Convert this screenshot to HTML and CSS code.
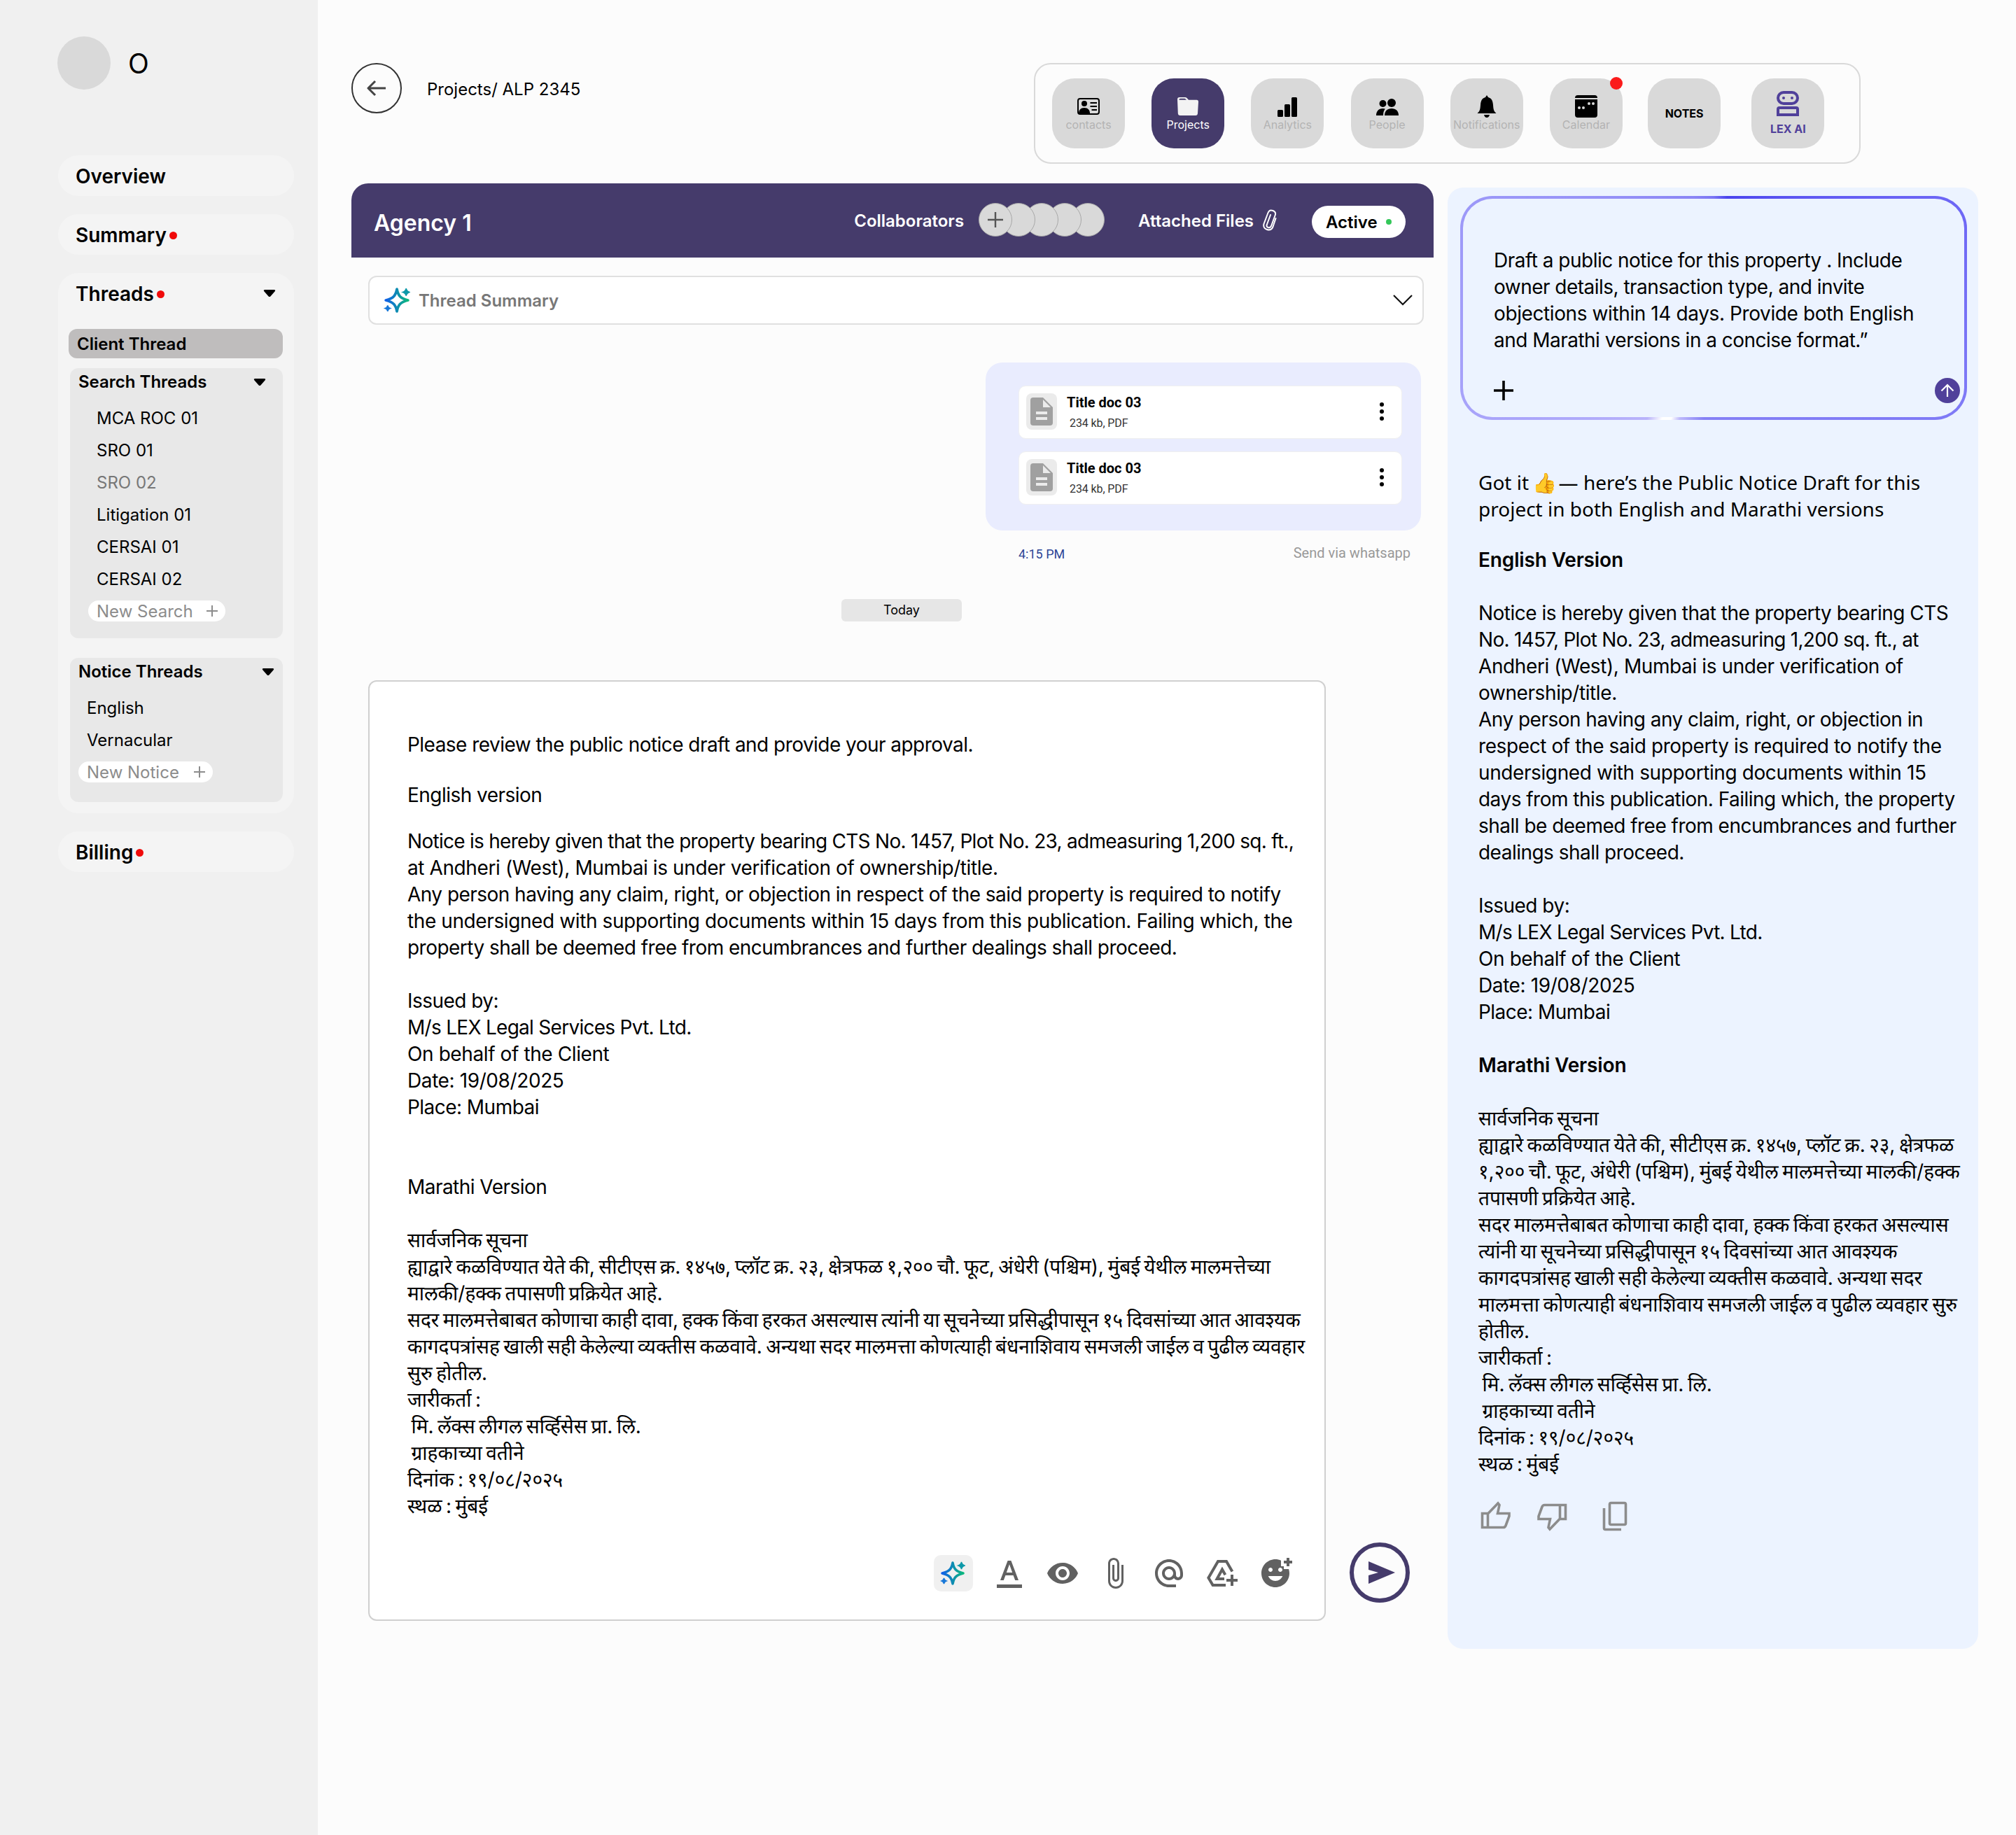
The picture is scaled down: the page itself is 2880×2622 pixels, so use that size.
FILE: index.html
```html
<!DOCTYPE html>
<html lang="en">
<head>
    <meta charset="UTF-8">
    <meta name="viewport" content="width=device-width, initial-scale=1.0">
    <title>Projects / ALP 2345</title>

    <link rel="stylesheet" href="styles.css">
</head>
<body>

    <!-- shared gradient for the sparkle icons -->
    <svg class="defs" width="0" height="0">
        <defs>
            <linearGradient id="spark" x1="0" y1="0" x2="1" y2="0">
                <stop offset="0" stop-color="#1060e8"/>
                <stop offset="1" stop-color="#0cb87c"/>
            </linearGradient>
            <symbol id="sparkle" viewBox="0 0 36 36">
                <path d="M18 3c1.600 8.500 4.500 12.500 15 15c-10.500 2.500-13.400 6.500-15 15c-1.600-8.500-4.500-12.500-15-15c10.500-2.500 13.400-6.500 15-15z" fill="none" stroke="url(#spark)" stroke-width="3.600" stroke-linejoin="round"/>
                <path d="M30.500 2c.6 3 1.500 4 4.500 5c-3 1-3.900 2-4.500 5c-.6-3-1.500-4-4.500-5c3-1 3.900-2 4.500-5z" fill="#0c98a8" stroke="#0c98a8" stroke-width="1.500"/>
                <path d="M5.500 25c.5 2.400 1.200 3.200 3.500 4c-2.300.8-3 1.600-3.500 4c-.5-2.400-1.200-3.200-3.500-4c2.300-.8 3-1.600 3.500-4z" fill="#1878d8" stroke="#1878d8" stroke-width="1.500"/>
            </symbol>
            <symbol id="caret" viewBox="0 0 18 12">
                <path d="M2 1h14q2 .4 .9 2l-6.500 7.400q-1.400 1.200-2.800 0L1.100 3Q0 1.400 2 1z"/>
            </symbol>
        </defs>
    </svg>

    <div class="app">

        <aside class="sidebar">
            <div class="profile">
                <span class="avatar"></span>
                <span class="initial">O</span>
            </div>

            <a class="nav-item">Overview</a>
            <a class="nav-item">Summary<i class="dot"></i></a>

            <div class="nav-group">
                <div class="nav-title">Threads<i class="dot"></i>
                    <svg class="caret"><use href="#caret"/></svg>
                </div>
                <div class="client-thread">Client Thread</div>

                <div class="block search-block">
                    <div class="block-title">Search Threads <svg class="caret"><use href="#caret"/></svg></div>
                    <ul>
                        <li>MCA ROC 01</li>
                        <li>SRO 01</li>
                        <li class="muted">SRO 02</li>
                        <li>Litigation 01</li>
                        <li>CERSAI 01</li>
                        <li>CERSAI 02</li>
                    </ul>
                    <button class="new-btn">New Search
                        <svg width="16" height="16" viewBox="0 0 16 16"><path d="M8 0v16M0 8h16" stroke="#8c8c8c" stroke-width="2"/></svg>
                    </button>
                </div>

                <div class="block notice-block">
                    <div class="block-title">Notice Threads <svg class="caret"><use href="#caret"/></svg></div>
                    <ul>
                        <li>English</li>
                        <li>Vernacular</li>
                    </ul>
                    <button class="new-btn">New Notice
                        <svg width="16" height="16" viewBox="0 0 16 16"><path d="M8 0v16M0 8h16" stroke="#8c8c8c" stroke-width="2"/></svg>
                    </button>
                </div>
            </div>

            <a class="nav-item">Billing<i class="dot"></i></a>
        </aside>

        <main class="main">

            <header class="topbar">
                <button class="back">
                    <svg width="28" height="24" viewBox="0 0 28 24"><path d="M27 12H2M12 2L2 12l10 10" fill="none" stroke="#444" stroke-width="3" stroke-linejoin="round"/></svg>
                </button>
                <span class="crumb">Projects/ ALP 2345</span>

                <nav class="tiles">
                    <a class="tile">
                        <svg width="32" height="32" viewBox="0 0 32 32">
                            <rect x="1" y="5" width="30" height="22" rx="3" fill="none" stroke="#000" stroke-width="2"/>
                            <circle cx="10" cy="12" r="4"/><path d="M2 26c0-5 3-8 8-8s8 3 8 8z"/>
                            <path d="M18.500 11H28M18.500 16H28M20.500 21H28" stroke="#000" stroke-width="2"/>
                        </svg>
                        <span>contacts</span>
                    </a>
                    <a class="tile active">
                        <svg width="32" height="32" viewBox="0 0 32 32">
                            <path d="M1 6q0-3 3-3h8q1.500 0 2.500 1l2.500 2.700h11.500q2.500 0 2.500 2.800L30 26q-.2 3-3 3H5q-3 0-3.200-3z" fill="#f3f3f3"/>
                            <path d="M3.300 6.800q.2-2 2-2h6q1 0 2.600 2z" fill="#453b6b"/>
                        </svg>
                        <span>Projects</span>
                    </a>
                    <a class="tile">
                        <svg width="32" height="32" viewBox="0 0 32 32"><rect x="2" y="21" width="8" height="10" rx="1.500"/><rect x="12" y="13" width="8" height="18" rx="1.500"/><rect x="22" y="3" width="8" height="28" rx="1.500"/></svg>
                        <span>Analytics</span>
                    </a>
                    <a class="tile">
                        <svg width="32" height="32" viewBox="0 0 32 32"><circle cx="9.500" cy="12" r="5"/><circle cx="22" cy="11" r="6"/><path d="M0 29c0-6 3.500-10 9.500-10q2 0 3.300.5Q10 23 10 29z"/><path d="M12 29c0-6.500 4-10 10-10s10 3.500 10 10z"/></svg>
                        <span>People</span>
                    </a>
                    <a class="tile">
                        <svg width="32" height="32" viewBox="0 0 32 32"><path d="M16 0l2 3c5 1.500 6.500 5 7 11c.4 6 1 9 4.500 12h-27C6 23 6.600 20 7 14c.5-6 2-9.500 7-11zM12 28h8q-1 4-4 4t-4-4z"/></svg>
                        <span>Notifications</span>
                    </a>
                    <a class="tile">
                        <svg width="32" height="32" viewBox="0 0 32 32"><path d="M0 4q0-4 4-4h24q4 0 4 4zM0 6h32v22q0 4-4 4H4q-4 0-4-4z"/><g fill="#d9d9d9"><circle cx="6" cy="18" r="2"/><circle cx="12" cy="18" r="2"/><circle cx="20" cy="12" r="2"/><circle cx="26" cy="12" r="2"/></g></svg>
                        <span>Calendar</span>
                        <i class="badge"></i>
                    </a>
                    <a class="tile notes"><b>NOTES</b></a>
                    <a class="tile lex">
                        <svg width="32" height="36" viewBox="0 0 32 36"><g fill="none" stroke="#50409a" stroke-width="4"><rect x="2" y="2" width="28" height="16" rx="8"/><path d="M2 34V26q0-2 2-2h24q2 0 2 2v8z"/></g><circle cx="10" cy="10" r="2" fill="#50409a"/><circle cx="22" cy="10" r="2" fill="#50409a"/></svg>
                        <b>LEX AI</b>
                    </a>
                </nav>
            </header>

            <div class="columns">

                <section class="thread">
                    <div class="thread-head">
                        <h1>Agency 1</h1>
                        <span class="label">Collaborators</span>
                        <div class="people">
                            <i><svg width="22" height="22" viewBox="0 0 22 22"><path d="M11 0v22M0 11h22" stroke="#555" stroke-width="2.400"/></svg></i>
                            <i></i><i></i><i></i><i></i>
                        </div>
                        <span class="label">Attached Files</span>
                        <svg class="clip" width="22" height="32" viewBox="0 0 22 32"><path d="M19.500 13L15.500 25Q13 31 7 29T2.500 21L8.500 5Q10.500 0 15.500 2T18.500 9L13 24Q11.500 27 8.500 26T7 21.500L12 8" fill="none" stroke="#fff" stroke-width="2" stroke-linecap="round"/></svg>
                        <span class="status">Active<i></i></span>
                    </div>

                    <div class="thread-body">
                        <div class="summary">
                            <svg width="38" height="38"><use href="#sparkle"/></svg>
                            <span>Thread Summary</span>
                            <svg class="chev" width="28" height="16" viewBox="0 0 28 16"><path d="M1 1l13 13L27 1" fill="none" stroke="#111" stroke-width="2.200"/></svg>
                        </div>

                        <div class="bubble">
                            <div class="doc">
                                <span class="doc-icon"><svg width="32" height="40" viewBox="0 0 32 40"><path d="M4 0h14l14 14v22q0 4-4 4H4q-4 0-4-4V4q0-4 4-4z" fill="#a0a0a0"/><path d="M18 3v11h11zM8 20h16v4H8zM8 28h16v4H8z" fill="#ebebeb"/></svg></span>
                                <div class="doc-info"><b>Title doc 03</b><span>234 kb, PDF</span></div>
                                <svg width="6" height="26" viewBox="0 0 6 26"><circle cx="3" cy="3" r="3"/><circle cx="3" cy="13" r="3"/><circle cx="3" cy="23" r="3"/></svg>
                            </div>
                            <div class="doc">
                                <span class="doc-icon"><svg width="32" height="40" viewBox="0 0 32 40"><path d="M4 0h14l14 14v22q0 4-4 4H4q-4 0-4-4V4q0-4 4-4z" fill="#a0a0a0"/><path d="M18 3v11h11zM8 20h16v4H8zM8 28h16v4H8z" fill="#ebebeb"/></svg></span>
                                <div class="doc-info"><b>Title doc 03</b><span>234 kb, PDF</span></div>
                                <svg width="6" height="26" viewBox="0 0 6 26"><circle cx="3" cy="3" r="3"/><circle cx="3" cy="13" r="3"/><circle cx="3" cy="23" r="3"/></svg>
                            </div>
                        </div>
                        <div class="bubble-meta"><span class="time">4:15 PM</span><span class="via">Send via whatsapp</span></div>

                        <div class="today">Today</div>

                        <div class="compose-row">
                            <div class="composer">
                                <p>Please review the public notice draft and provide your approval.</p>
                                <p class="sub">English version</p>
                                <p><span class="tight">Notice is hereby given that the property bearing CTS No. 1457, Plot No. 23, admeasuring 1,200 sq. ft.,</span><br>
                                <span class="wide">at Andheri (West), Mumbai is under verification of ownership/title.</span><br>
                                Any person having any claim, right, or objection in respect of the said property is required to notify<br>
                                <span class="wide">the undersigned with supporting documents within 15 days from this publication. Failing which, the</span><br>
                                property shall be deemed free from encumbrances and further dealings shall proceed.<br>
                                <br>
                                Issued by:<br>
                                <span class="tight">M/s LEX Legal Services Pvt. Ltd.</span><br>
                                <span class="wide">On behalf of the Client</span><br>
                                <span class="wide">Date: 19/08/2025</span><br>
                                Place: Mumbai<br>
                                <br>
                                <br>
                                Marathi Version<br>
                                <br></p>
                                <p class="mr" lang="mr">सार्वजनिक सूचना<br>
                                ह्याद्वारे कळविण्यात येते की, सीटीएस क्र. १४५७, प्लॉट क्र. २३, क्षेत्रफळ १,२०० चौ. फूट, अंधेरी (पश्चिम), मुंबई येथील मालमत्तेच्या<br>
                                मालकी/हक्क तपासणी प्रक्रियेत आहे.<br>
                                सदर मालमत्तेबाबत कोणाचा काही दावा, हक्क किंवा हरकत असल्यास त्यांनी या सूचनेच्या प्रसिद्धीपासून १५ दिवसांच्या आत आवश्यक<br>
                                कागदपत्रांसह खाली सही केलेल्या व्यक्तीस कळवावे. अन्यथा सदर मालमत्ता कोणत्याही बंधनाशिवाय समजली जाईल व पुढील व्यवहार<br>
                                सुरु होतील.<br>
                                जारीकर्ता :<br>
                                &nbsp;मि. लॅक्स लीगल सर्व्हिसेस प्रा. लि.<br>
                                &nbsp;ग्राहकाच्या वतीने<br>
                                दिनांक : १९/०८/२०२५<br>
                                स्थळ : मुंबई</p>

                                <div class="tools">
                                    <span class="spark-btn"><svg width="36" height="36"><use href="#sparkle"/></svg></span>
                                    <svg class="t-a" viewBox="0 0 24 24"><path d="M3 20h18v2.500H3zM5.500 17h2.400l1.300-3.500h5.600L16.100 17h2.400L13.200 3h-2.400zM9.900 11.500L12 5.600l2.100 5.900z"/></svg>
                                    <svg viewBox="0 0 24 24"><path d="M12 4.500C7 4.500 2.730 7.610 1 12c1.730 4.390 6 7.500 11 7.500s9.270-3.110 11-7.500c-1.730-4.390-6-7.500-11-7.500zM12 17c-2.760 0-5-2.240-5-5s2.240-5 5-5 5 2.240 5 5-2.240 5-5 5zm0-8c-1.660 0-3 1.340-3 3s1.340 3 3 3 3-1.340 3-3-1.340-3-3-3z"/></svg>
                                    <svg class="t-clip" viewBox="0 0 24 24"><path d="M16.500 6v11.500c0 2.210-1.790 4-4 4s-4-1.790-4-4V5c0-1.380 1.120-2.500 2.500-2.500s2.500 1.120 2.500 2.500v10.500c0 .55-.45 1-1 1s-1-.45-1-1V6H10v9.500c0 1.380 1.120 2.500 2.500 2.500s2.500-1.120 2.500-2.500V5c0-2.210-1.790-4-4-4S7 2.790 7 5v12.500c0 3.040 2.460 5.500 5.500 5.500s5.500-2.460 5.500-5.500V6h-1.500z"/></svg>
                                    <svg viewBox="0 0 24 24"><path d="M12 2C6.480 2 2 6.480 2 12s4.480 10 10 10h5v-2h-5c-4.340 0-8-3.660-8-8s3.660-8 8-8 8 3.660 8 8v1.430c0 .79-.71 1.570-1.500 1.570s-1.500-.78-1.500-1.570V12c0-2.760-2.240-5-5-5s-5 2.240-5 5 2.240 5 5 5c1.380 0 2.640-.56 3.540-1.470.65.89 1.770 1.470 2.960 1.470 1.970 0 3.500-1.600 3.500-3.570V12c0-5.520-4.480-10-10-10zm0 13c-1.660 0-3-1.340-3-3s1.340-3 3-3 3 1.340 3 3-1.340 3-3 3z"/></svg>
                                    <svg viewBox="0 0 24 24"><path d="M14.500 20.500H5.300L2.200 15.200L9 3.500h6l4.200 7.300" fill="none" stroke="#616161" stroke-width="2"/><path d="M13.500 16H8.300L12 9.300l2.200 3.800" fill="none" stroke="#616161" stroke-width="2"/><path d="M20 13v3h3v2h-3v3h-2v-3h-3v-2h3v-3z"/></svg>
                                    <svg viewBox="0 0 24 24"><path fill-rule="evenodd" d="M18 9V7h-2V2.840C14.770 2.300 13.420 2 11.990 2 6.470 2 2 6.480 2 12s4.470 10 9.990 10C17.520 22 22 17.520 22 12c0-1.050-.17-2.050-.47-3H18zm-2.500-1c.83 0 1.500.67 1.500 1.500s-.67 1.500-1.500 1.500-1.500-.67-1.500-1.500S14.670 8 15.500 8zm-7 0c.83 0 1.500.67 1.500 1.500S9.330 11 8.500 11 7 10.330 7 9.500 7.670 8 8.500 8zM12 17.500c-2.330 0-4.310-1.460-5.110-3.500h10.220c-.8 2.040-2.780 3.500-5.110 3.500zM22 3h2v2h-2v2h-2V5h-2V3h2V1h2v2z"/></svg>
                                </div>
                            </div>
                            <button class="send">
                                <svg width="38" height="32" viewBox="0 0 38 32"><path d="M0 0l38 16L0 32V20l14-4L0 12z" fill="#453b6b"/></svg>
                            </button>
                        </div>
                    </div>
                </section>

                <aside class="assistant">
                    <div class="prompt">
                        <p>Draft a public notice for this property . Include<br>
                        owner details, transaction type, and invite<br>
                        <span class="wide">objections within 14 days. Provide both English</span><br>
                        and Marathi versions in a concise format.”</p>
                        <div class="prompt-actions">
                            <svg width="28" height="28" viewBox="0 0 28 28"><path d="M14 0v28M0 14h28" stroke="#000" stroke-width="3.600"/></svg>
                            <button class="up"><svg width="20" height="20" viewBox="0 0 20 20"><path d="M10 19V2M1.500 10.500L10 2l8.500 8.500" fill="none" stroke="#fff" stroke-width="2.200"/></svg></button>
                        </div>
                    </div>

                    <p class="reply">Got it <span class="emoji">👍</span> — here’s the Public Notice Draft for this<br>
                    project in both English and Marathi versions</p>
                    <h2>English Version</h2>
                    <p class="text">Notice is hereby given that the property bearing CTS<br>
                    <span class="tight">No. 1457, Plot No. 23, admeasuring 1,200 sq. ft., at</span><br>
                    <span class="wide">Andheri (West), Mumbai is under verification of</span><br>
                    <span class="wide">ownership/title.</span><br>
                    Any person having any claim, right, or objection in<br>
                    <span class="wide">respect of the said property is required to notify the</span><br>
                    <span class="wide">undersigned with supporting documents within 15</span><br>
                    days from this publication. Failing which, the property<br>
                    shall be deemed free from encumbrances and further<br>
                    dealings shall proceed.<br>
                    <br>
                    Issued by:<br>
                    <span class="tight">M/s LEX Legal Services Pvt. Ltd.</span><br>
                    <span class="wide">On behalf of the Client</span><br>
                    <span class="wide">Date: 19/08/2025</span><br>
                    Place: Mumbai</p>
                    <h2>Marathi Version</h2>
                    <p class="text mr" lang="mr">सार्वजनिक सूचना<br>
                    ह्याद्वारे कळविण्यात येते की, सीटीएस क्र. १४५७, प्लॉट क्र. २३, क्षेत्रफळ<br>
                    १,२०० चौ. फूट, अंधेरी (पश्चिम), मुंबई येथील मालमत्तेच्या मालकी/हक्क<br>
                    तपासणी प्रक्रियेत आहे.<br>
                    सदर मालमत्तेबाबत कोणाचा काही दावा, हक्क किंवा हरकत असल्यास<br>
                    त्यांनी या सूचनेच्या प्रसिद्धीपासून १५ दिवसांच्या आत आवश्यक<br>
                    कागदपत्रांसह खाली सही केलेल्या व्यक्तीस कळवावे. अन्यथा सदर<br>
                    मालमत्ता कोणत्याही बंधनाशिवाय समजली जाईल व पुढील व्यवहार सुरु<br>
                    होतील.<br>
                    जारीकर्ता :<br>
                    &nbsp;मि. लॅक्स लीगल सर्व्हिसेस प्रा. लि.<br>
                    &nbsp;ग्राहकाच्या वतीने<br>
                    दिनांक : १९/०८/२०२५<br>
                    स्थळ : मुंबई</p>

                    <div class="feedback">
                        <svg width="44" height="44" viewBox="0 0 44 44"><path d="M2.500 18.500h8v20h-8zM10.500 19L25 4l2 2.500L24.500 18.500H41v4L36 36q-1 2.500-3.500 2.500h-22" fill="none" stroke="#8c8c8c" stroke-width="3.600"/></svg>
                        <svg width="44" height="44" viewBox="0 0 44 44"><path d="M41.500 6.500h-8v20h8zM33.500 26L19 41l-2-2.500L19.500 26.500H3v-4L8 9q1-2.500 3.500-2.500h22" fill="none" stroke="#8c8c8c" stroke-width="3.600"/></svg>
                        <svg class="copy" width="36" height="44" viewBox="0 0 36 44"><rect x="10.500" y="3.500" width="23" height="31" rx="2" fill="none" stroke="#8c8c8c" stroke-width="3.600"/><path d="M2.500 11v28.500q0 2 2 2H27" fill="none" stroke="#8c8c8c" stroke-width="3.600"/></svg>
                    </div>
                </aside>

            </div>
        </main>
    </div>

</body>
</html>
```
FILE: styles.css
```css
* {
    box-sizing: border-box;
}
body {
    margin: 0;
    font-family: Inter, "Liberation Sans", sans-serif;
    font-size: 24px;
    color: #000;
    background: #fcfcfc;
}
h1, h2, p, ul {
    margin: 0;
    padding: 0;
    list-style: none;
}
button {
    border: 0;
    padding: 0;
    font: inherit;
}
svg {
    display: block;
    flex: none;
}
.defs {
    position: absolute;
}
.app {
    display: flex;
    min-height: 2622px;
}

/* sidebar */
.sidebar {
    width: 454px;
    flex: none;
    padding: 52px 34px 0 83px;
    background: #f0f0f0;
}
.profile {
    display: flex;
    align-items: center;
    gap: 25px;
    height: 76px;
    margin: 0 0 94px -1px;
}
.avatar {
    width: 76px;
    height: 76px;
    border-radius: 50%;
    background: #d9d9d9;
}
.initial {
    font-size: 39px;
}
.nav-item, .nav-title {
    display: flex;
    align-items: center;
    height: 58px;
    padding: 2px 0 0 25px;
    font-size: 28px;
    font-weight: 600;
}
.nav-item {
    margin-bottom: 26px;
    border-radius: 29px;
    background: #f4f4f4;
}
.dot {
    width: 11px;
    height: 11px;
    margin-left: 4px;
    border-radius: 50%;
    background: #f00a0a;
}
.nav-group {
    height: 772px;
    margin-bottom: 26px;
    border-radius: 29px;
    background: #f4f4f4;
}
.caret {
    width: 18px;
    height: 12px;
    margin-left: auto;
}
.nav-title .caret {
    margin: -2px 26px 0 auto;
}
.client-thread {
    height: 42px;
    margin: 22px 16px 14px 15px;
    padding-left: 12px;
    border-radius: 12px;
    background: #bfbdbd;
    font-weight: 600;
    line-height: 43px;
}
.block {
    margin: 0 16px 0 17px;
    border-radius: 12px;
    background: #e8e8e8;
}
.search-block {
    height: 386px;
    margin-bottom: 28px;
}
.notice-block {
    height: 206px;
}
.block-title {
    display: flex;
    align-items: center;
    height: 39px;
    padding: 0 24px 0 12px;
    font-weight: 600;
}
.notice-block .block-title {
    padding-right: 12px;
}
.block li {
    height: 46px;
    padding-left: 38px;
    line-height: 46px;
}
.block ul {
    padding-top: 10px;
}
.notice-block li {
    padding-left: 24px;
}
.block .muted {
    color: #777;
}
.new-btn {
    display: flex;
    align-items: center;
    justify-content: space-between;
    width: 196px;
    height: 30px;
    margin: 7px 0 0 26px;
    padding: 0 11px 0 12px;
    border-radius: 15px;
    background: #fff;
    color: #8c8c8c;
}
.notice-block .new-btn {
    width: 192px;
    margin-left: 12px;
}

/* top bar */
.main {
    width: 2426px;
    padding: 90px 54px 0 48px;
}
.topbar {
    display: flex;
    align-items: flex-start;
    height: 172px;
}
.back {
    display: flex;
    align-items: center;
    justify-content: center;
    width: 72px;
    height: 72px;
    border: 2px solid #333;
    border-radius: 50%;
    background: none;
}
.crumb {
    margin-left: 36px;
    line-height: 76px;
}
.tiles {
    display: flex;
    gap: 38.200px;
    width: 1181px;
    height: 144px;
    margin-left: auto;
    margin-right: 168px;
    padding: 20px 24px;
    border: 2px solid #d9d9d9;
    border-radius: 24px;
}
.tile {
    position: relative;
    display: flex;
    flex-direction: column;
    align-items: center;
    width: 104px;
    height: 100px;
    flex: none;
    padding-top: 24px;
    border-radius: 32px;
    background: #d9d9d9;
    color: #b3b3b3;
    font-size: 16px;
    white-space: nowrap;
}
.tile span {
    line-height: 21px;
}
.tile.active {
    background: #453b6b;
    color: #fff;
}
.tile b {
    font-weight: 700;
    color: #000;
    line-height: 20px;
}
.tile.notes {
    justify-content: center;
    margin-left: -2px;
    padding: 0;
}
.tile.lex {
    margin-left: 6px;
    padding-top: 18px;
}
.tile.lex b {
    margin-top: 8px;
    color: #50409a;
}
.badge {
    position: absolute;
    top: -2px;
    right: 0;
    width: 18px;
    height: 18px;
    border-radius: 50%;
    background: #fb1b1b;
}

/* thread column */
.columns {
    display: flex;
    align-items: flex-start;
    gap: 20px;
}
.thread {
    width: 1546px;
    flex: none;
}
.thread-head {
    display: flex;
    align-items: center;
    height: 106px;
    padding: 0 40px 2px 32px;
    border-radius: 24px 24px 0 0;
    background: #453b6b;
    color: #fff;
    font-weight: 600;
}
.thread-head h1 {
    margin: 9px auto 0 0;
    font-size: 32px;
    font-weight: 600;
}
.thread-head .label {
    margin-top: 2px;
}
.people {
    display: flex;
    margin: 0 48px 0 21px;
}
.people i {
    display: flex;
    align-items: center;
    justify-content: center;
    width: 48px;
    height: 48px;
    margin-right: -15px;
    border: 1px solid #a8a8a8;
    border-radius: 50%;
    background: #d9d9d9;
}
.people i:nth-child(1) { z-index: 5; }
.people i:nth-child(2) { z-index: 4; }
.people i:nth-child(3) { z-index: 3; }
.people i:nth-child(4) { z-index: 2; }
.people i:last-child {
    margin-right: 0;
}
.clip {
    margin: 1px 49px 0 12px;
}
.status {
    display: flex;
    align-items: center;
    justify-content: space-between;
    width: 134px;
    height: 46px;
    padding: 1px 20px 0;
    border-radius: 23px;
    background: #fff;
    color: #000;
    margin-top: 5px;
}
.status i {
    width: 8px;
    height: 8px;
    border-radius: 50%;
    background: #34c759;
}
.thread-body {
    padding: 26px 14px 0 24px;
}
.summary {
    display: flex;
    align-items: center;
    height: 70px;
    padding: 0 14px 0 20px;
    border: 2px solid #e0e0e0;
    border-radius: 12px;
    background: #fff;
    color: #777;
    font-weight: 600;
}
.summary span {
    margin: 0 auto 0 12px;
}
.bubble {
    display: flex;
    flex-direction: column;
    gap: 18px;
    width: 622px;
    height: 240px;
    margin: 54px 4px 0 auto;
    padding: 33px 27px 0 47px;
    border-radius: 24px;
    background: #e9ecfe;
}
.doc {
    display: flex;
    align-items: center;
    height: 76px;
    padding: 0 25px 2px 10px;
    border: 1px solid #f0f0f0;
    border-radius: 10px;
    background: #fff;
    font-family: Roboto, sans-serif;
}
.doc-icon {
    display: flex;
    align-items: center;
    justify-content: center;
    width: 44px;
    height: 52px;
    border-radius: 8px;
    background: #ebebeb;
}
.doc-info {
    display: flex;
    flex-direction: column;
    margin: 4px auto 0 14px;
}
.doc-info b {
    font-size: 20px;
    line-height: 29px;
}
.doc-info span {
    padding-left: 4px;
    font-size: 16px;
    line-height: 29px;
    letter-spacing: -.1px;
    color: #333;
}
.bubble-meta {
    display: flex;
    justify-content: space-between;
    width: 560px;
    height: 98px;
    margin: 0 19px 0 auto;
    padding-top: 18px;
    font-family: Roboto, sans-serif;
    font-size: 20px;
    line-height: 28px;
}
.time {
    padding-top: 2px;
    font-size: 18px;
    color: #2d4696;
}
.via {
    color: #999;
}
.today {
    width: 172px;
    height: 32px;
    margin: 0 auto 84px 676px;
    border-radius: 6px;
    background: #e6e6e6;
    font-size: 18px;
    line-height: 32px;
    text-align: center;
}

/* composer */
.compose-row {
    display: flex;
    align-items: flex-end;
    gap: 34px;
}
.composer {
    width: 1368px;
    height: 1344px;
    padding: 71px 0 0 54px;
    border: 2px solid #d0d0d0;
    border-radius: 12px;
    background: #fff;
    font-size: 28px;
    line-height: 38px;
    letter-spacing: -.54px;
    white-space: nowrap;
}
.composer .sub {
    margin: 34px 0 28px;
}

/* per line tracking */
.wide {
    letter-spacing: -.4px;
}
.tight {
    letter-spacing: -.72px;
}
.composer .mr, .assistant .mr {
    font-family: Inter, "Noto Sans Devanagari", "Noto Sans", sans-serif;
    letter-spacing: 0;
    word-spacing: -2.400px;
}
.tools {
    display: flex;
    align-items: center;
    gap: 28px;
    margin: 51px 0 0 752px;
    fill: #616161;
}
.tools > svg {
    width: 48px;
    height: 48px;
}
.tools .t-clip {
    margin: 0 1px 0 -1px;
}
.spark-btn {
    display: flex;
    align-items: center;
    justify-content: center;
    width: 56px;
    height: 52px;
    padding: 0 3px 0 0;
    border-radius: 10px;
    background: #f0f0f0;
}
.send {
    display: flex;
    align-items: center;
    justify-content: center;
    width: 86px;
    height: 86px;
    margin-bottom: 26px;
    padding-left: 6px;
    border: 6px solid #453b6b;
    border-radius: 50%;
    background: none;
}

/* assistant panel */
.assistant {
    width: 758px;
    height: 2088px;
    margin-top: 6px;
    padding: 12px 16px 0 44px;
    border-radius: 22px;
    background: #ecf3ff;
    font-size: 28px;
    line-height: 38px;
    letter-spacing: -.52px;
    white-space: nowrap;
}
.prompt {
    width: 724px;
    height: 320px;
    margin-left: -26px;
    padding: 69px 6px 0 44px;
    border: 4px solid transparent;
    border-radius: 46px;
    background:
        linear-gradient(#ecf3ff, #ecf3ff) padding-box,
        conic-gradient(#7b76f5, #4a44ee 7deg, #6a63f5 60deg, #7f7af6 110deg, #8580f5 185deg, #bdb8fb 197deg, #fff 201deg, #fff 205deg, #b9b3fa 211deg, #aaa5fa 240deg, #9a96f8 300deg, #8a85f5 350deg, #7b76f5) border-box;
}
.prompt-actions {
    display: flex;
    align-items: center;
    justify-content: space-between;
    margin-top: 35px;
}
.up {
    display: flex;
    align-items: center;
    justify-content: center;
    width: 36px;
    height: 36px;
    border-radius: 50%;
    background: #50409a;
}
.reply {
    margin-top: 70px;
    font-family: "Noto Sans", sans-serif;
    letter-spacing: 0;
}
.emoji {
    margin: 0 -5px 0 -2px;
    font-size: 28px;
    line-height: 1;
}
.assistant h2 {
    margin: 35px 0 38px;
    font-size: 28px;
    font-weight: 600;
    line-height: 38px;
    letter-spacing: -.15px;
}
.assistant .text + h2 {
    margin-top: 38px;
}
.feedback {
    display: flex;
    gap: 36px;
    margin: 33px 0 0 3px;
}
.copy {
    margin-left: 14px;
}
```
